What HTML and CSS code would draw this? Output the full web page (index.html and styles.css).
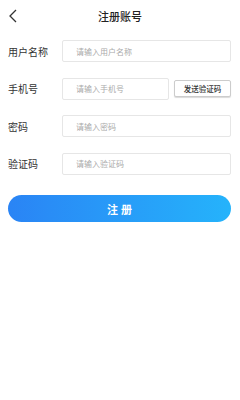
FILE: index.html
```html
<!DOCTYPE html>
<html lang="zh">
<head>
    <meta charset="UTF-8">
    <meta name="viewport" content="width=device-width, initial-scale=1.0">
    <title>注册账号</title>
    <link rel="stylesheet" href="styles.css">
</head>
<body>
    <header class="topbar">
        <span class="back">
            <svg width="10" height="14" viewBox="0 0 10 14"><path d="M8 1 L2 7 L8 13" fill="none" stroke="#333" stroke-width="1.3"/></svg>
        </span>
        <h1>注册账号</h1>
    </header>
    <form class="reg-form" action="#" method="get">
        <div class="row">
            <label for="username">用户名称</label>
            <input type="text" id="username" placeholder="请输入用户名称">
        </div>
        <div class="row">
            <label for="phone">手机号</label>
            <input type="text" id="phone" placeholder="请输入手机号">
            <button type="button" class="send-code">发送验证码</button>
        </div>
        <div class="row">
            <label for="password">密码</label>
            <input type="password" id="password" placeholder="请输入密码">
        </div>
        <div class="row">
            <label for="code">验证码</label>
            <input type="text" id="code" placeholder="请输入验证码">
        </div>
        <button type="button" class="submit">注册</button>
    </form>
</body>
</html>
```

FILE: styles.css
```css
body {
    font-family: "Noto Sans CJK SC", "Noto Sans", sans-serif;
    margin: 0;
    padding: 0;
    background-color: #fff;
    color: #333;
}
.topbar {
    position: relative;
    height: 32px;
    display: flex;
    align-items: center;
    justify-content: center;
}
.topbar h1 {
    margin: 0;
    font-size: 11px;
    font-weight: 500;
    color: #222;
}
.back {
    position: absolute;
    left: 8px;
    top: 9px;
    display: flex;
}
.reg-form {
    padding: 8px 9px 0 8px;
    display: flex;
    flex-direction: column;
    gap: 15.5px;
}
.row {
    display: flex;
    align-items: center;
    height: 22px;
}
.row label {
    width: 54px;
    font-size: 10px;
    color: #333;
}
.row input {
    flex: 1;
    min-width: 0;
    height: 22px;
    box-sizing: border-box;
    border: 1px solid #e6e6e6;
    border-radius: 2px;
    padding: 0 0 0 13px;
    font-family: inherit;
    font-size: 8px;
    outline: none;
}
.row input::placeholder {
    color: #aaa;
}
.send-code {
    margin-left: 5px;
    width: 57px;
    height: 17px;
    padding: 0;
    font-family: inherit;
    font-size: 7.5px;
    font-weight: 500;
    color: #333;
    background: #fff;
    border: 1px solid #ccc;
    border-radius: 2px;
    box-shadow: 0 1px 1px rgba(0, 0, 0, 0.15);
}
.submit {
    margin-top: 5px;
    height: 27px;
    border: none;
    border-radius: 14px;
    background: linear-gradient(90deg, #2a84f5, #25b3fb);
    color: #fff;
    font-family: inherit;
    font-size: 11px;
    font-weight: bold;
    letter-spacing: 3px;
    text-indent: 3px;
}
```
